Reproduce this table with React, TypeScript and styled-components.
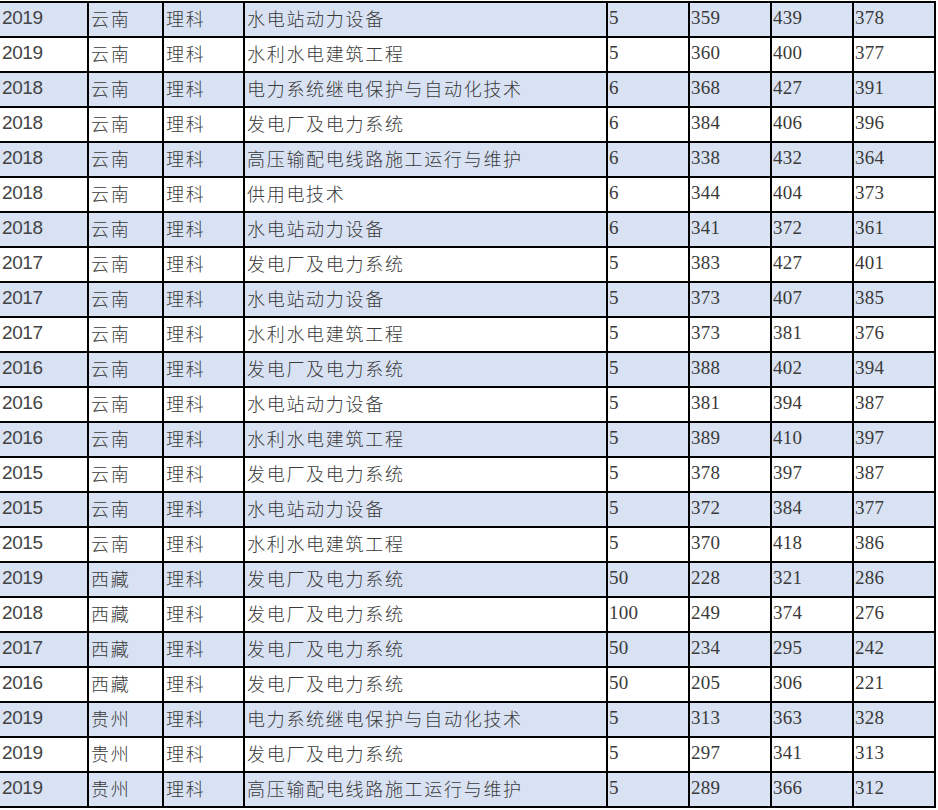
import React from 'react';
import styled, { createGlobalStyle } from 'styled-components';

const GlobalStyle = createGlobalStyle`
  body {
    margin: 0;
    background: #fff;
  }
`;

type Row = [string, string, string, string, string, string, string, string];

const ROWS: Row[] = [
  ['2019', '云南', '理科', '水电站动力设备', '5', '359', '439', '378'],
  ['2019', '云南', '理科', '水利水电建筑工程', '5', '360', '400', '377'],
  ['2018', '云南', '理科', '电力系统继电保护与自动化技术', '6', '368', '427', '391'],
  ['2018', '云南', '理科', '发电厂及电力系统', '6', '384', '406', '396'],
  ['2018', '云南', '理科', '高压输配电线路施工运行与维护', '6', '338', '432', '364'],
  ['2018', '云南', '理科', '供用电技术', '6', '344', '404', '373'],
  ['2018', '云南', '理科', '水电站动力设备', '6', '341', '372', '361'],
  ['2017', '云南', '理科', '发电厂及电力系统', '5', '383', '427', '401'],
  ['2017', '云南', '理科', '水电站动力设备', '5', '373', '407', '385'],
  ['2017', '云南', '理科', '水利水电建筑工程', '5', '373', '381', '376'],
  ['2016', '云南', '理科', '发电厂及电力系统', '5', '388', '402', '394'],
  ['2016', '云南', '理科', '水电站动力设备', '5', '381', '394', '387'],
  ['2016', '云南', '理科', '水利水电建筑工程', '5', '389', '410', '397'],
  ['2015', '云南', '理科', '发电厂及电力系统', '5', '378', '397', '387'],
  ['2015', '云南', '理科', '水电站动力设备', '5', '372', '384', '377'],
  ['2015', '云南', '理科', '水利水电建筑工程', '5', '370', '418', '386'],
  ['2019', '西藏', '理科', '发电厂及电力系统', '50', '228', '321', '286'],
  ['2018', '西藏', '理科', '发电厂及电力系统', '100', '249', '374', '276'],
  ['2017', '西藏', '理科', '发电厂及电力系统', '50', '234', '295', '242'],
  ['2016', '西藏', '理科', '发电厂及电力系统', '50', '205', '306', '221'],
  ['2019', '贵州', '理科', '电力系统继电保护与自动化技术', '5', '313', '363', '328'],
  ['2019', '贵州', '理科', '发电厂及电力系统', '5', '297', '341', '313'],
  ['2019', '贵州', '理科', '高压输配电线路施工运行与维护', '5', '289', '366', '312'],
];

const Sheet = styled.div`
  margin-top: 1px;
  width: 934px;
  padding: 2px 2px 2px 0;
  background: #000;
  display: flex;
  flex-direction: column;
  gap: 2px;
`;

const SheetRow = styled.div`
  display: grid;
  grid-template-columns: 87px 73px 79px 361px 80px 80px 80px 80px;
  column-gap: 2px;
  height: 33px;
`;

type Kind = 'year' | 'text' | 'num';

const FONTS: Record<Kind, string> = {
  year: '"Liberation Sans", Arial, sans-serif',
  text: '"Noto Sans CJK SC", "Noto Sans", sans-serif',
  num: '"Liberation Serif", "Times New Roman", serif',
};

const Cell = styled.div<{ $shaded: boolean; $kind: Kind }>`
  background: ${(p) => (p.$shaded ? '#d9e2f3' : '#ffffff')};
  color: ${(p) => (p.$kind === 'year' ? '#444' : '#3a3a3a')};
  display: flex;
  align-items: center;
  padding: 0 0 3px ${(p) => (p.$kind === 'num' ? '1px' : '2px')};
  white-space: nowrap;
  overflow: hidden;
  font-family: ${(p) => FONTS[p.$kind]};
  font-size: ${(p) => (p.$kind === 'text' ? '18px' : '19px')};
  font-weight: ${(p) => (p.$kind === 'text' ? 300 : 400)};
  letter-spacing: ${(p) => (p.$kind === 'text' ? '1.7px' : p.$kind === 'year' ? '-0.4px' : '0.3px')};
`;

const kindOf = (i: number): Kind => (i === 0 ? 'year' : i < 4 ? 'text' : 'num');

export default function App() {
  return (
    <>
      <GlobalStyle />
      <Sheet>
        {ROWS.map((row, r) => (
          <SheetRow key={r}>
            {row.map((value, c) => (
              <Cell key={c} $shaded={r % 2 === 0} $kind={kindOf(c)}>
                {value}
              </Cell>
            ))}
          </SheetRow>
        ))}
      </Sheet>
    </>
  );
}
